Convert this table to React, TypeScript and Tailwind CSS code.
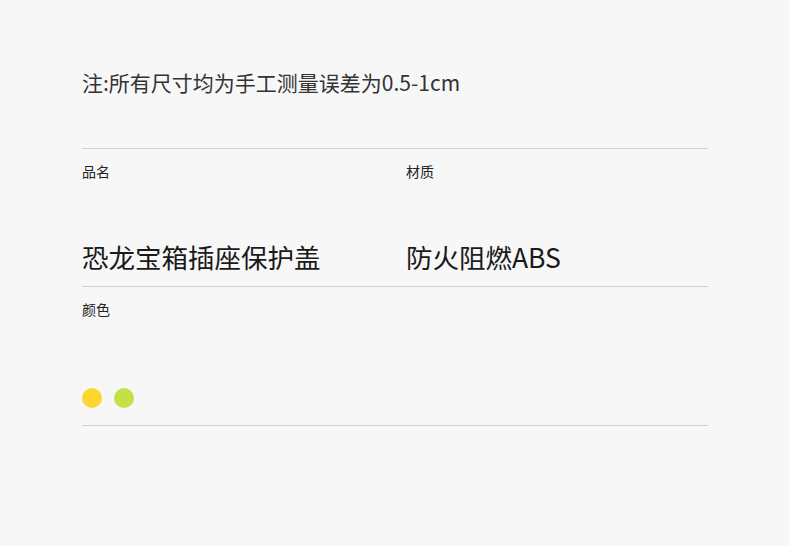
export default function App() {
  const font = { fontFamily: '"Noto Sans CJK SC", "Noto Sans", sans-serif' };
  return (
    <div className="w-[790px] h-[546px] bg-[#f7f7f7] text-[#222]" style={font}>
      <div className="pl-[82px] w-[708px]">
        <p className="pt-[67px] text-[21px] leading-[30px] text-[#333]">注:所有尺寸均为手工测量误差为0.5-1cm</p>

        <div className="mt-[51px] border-t-[1.5px] border-[#d0d0d0]" />
        <div className="grid grid-cols-[324px_1fr]">
          <div>
            <p className="mt-[12px] text-[14px] leading-[20px]">品名</p>
            <p className="mt-[57px] text-[26.5px] leading-[38px] text-[#1a1a1a]">恐龙宝箱插座保护盖</p>
          </div>
          <div>
            <p className="mt-[12px] text-[14px] leading-[20px]">材质</p>
            <p className="mt-[57px] text-[26.5px] leading-[38px] text-[#1a1a1a]">防火阻燃ABS</p>
          </div>
        </div>

        <div className="mt-[10px] border-t-[1.5px] border-[#d0d0d0]" />
        <p className="mt-[12px] text-[14px] leading-[20px]">颜色</p>
        <div className="mt-[69px] flex gap-[12px]">
          <span className="w-[20px] h-[20px] rounded-full bg-[#fdd72f]" />
          <span className="w-[20px] h-[20px] rounded-full bg-[#c3e146]" />
        </div>
        <div className="mt-[17px] border-t-[1.5px] border-[#d0d0d0]" />
      </div>
    </div>
  );
}
